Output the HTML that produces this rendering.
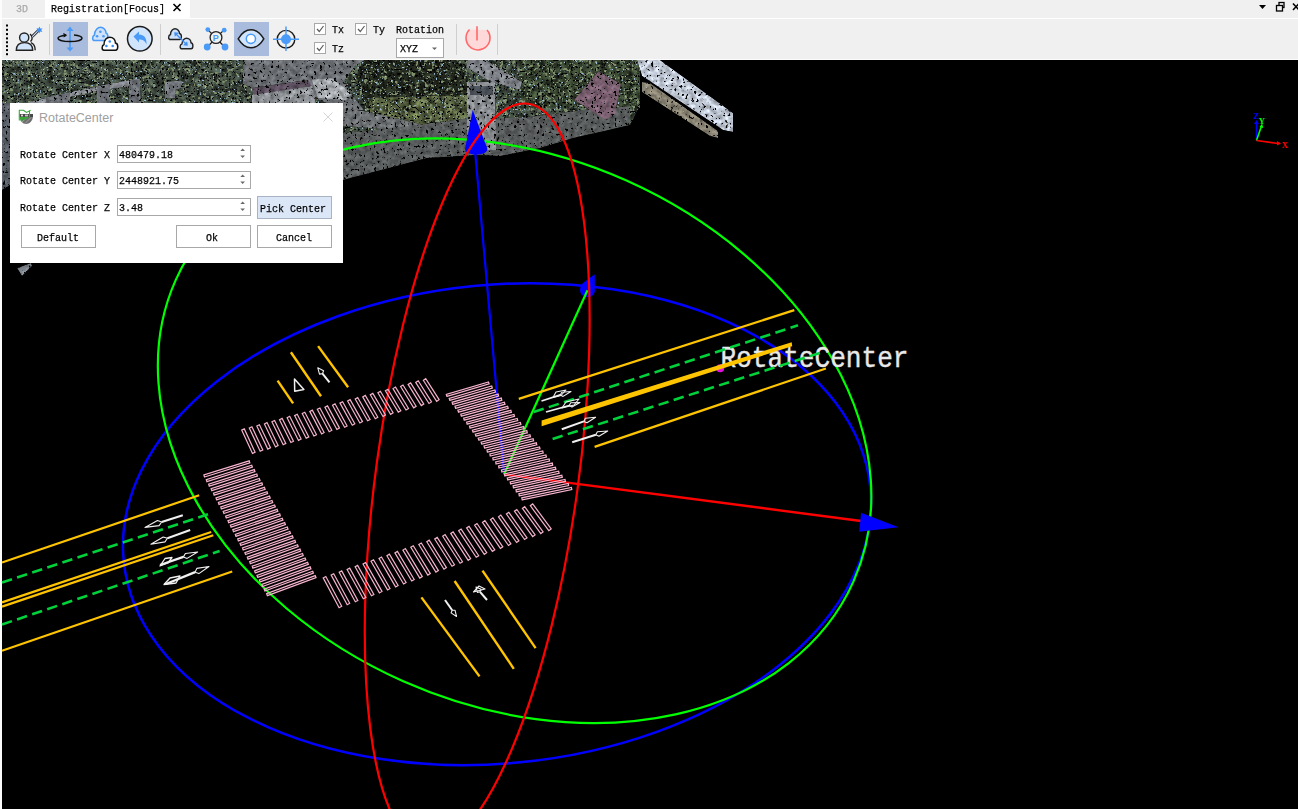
<!DOCTYPE html>
<html><head><meta charset="utf-8">
<style>
*{margin:0;padding:0;box-sizing:border-box}
html,body{width:1298px;height:809px;overflow:hidden;background:#f0f0f0}
body{position:relative;font-family:"Liberation Mono",monospace;color:#000}
.abs{position:absolute}
.mono{font-family:"Liberation Mono",monospace;font-size:11.5px;line-height:12px;white-space:pre;position:absolute;transform-origin:0 0;transform:scaleX(0.8696);-webkit-text-stroke:0.25px currentColor}
#scene{position:absolute;left:0;top:0}
</style></head><body>
<svg id="scene" width="1298" height="809" viewBox="0 0 1298 809">
<rect x="0" y="0" width="1298" height="809" fill="#f0f0f0"/>
<rect x="0" y="0" width="2" height="809" fill="#fcfcfc"/>
<rect x="2" y="60" width="1296" height="749" fill="#000"/>
<defs><filter id="spk" color-interpolation-filters="sRGB" x="0" y="0" width="1298" height="809" filterUnits="userSpaceOnUse">
 <feTurbulence type="fractalNoise" baseFrequency="0.15" numOctaves="2" seed="3" result="n1"/>
 <feColorMatrix in="n1" type="matrix" values="1.0 0 0 0 0.0  1.0 0 0 0 0.0  1.0 0 0 0 0.0  0 0 0 0 1" result="g1"/>
 <feComposite in="SourceGraphic" in2="g1" operator="arithmetic" k1="2" k2="0" k3="0" k4="0" result="m0"/>
 <feTurbulence type="fractalNoise" baseFrequency="0.25" numOctaves="2" seed="23" result="h"/>
 <feColorMatrix in="h" type="matrix" values="0 0 0 0 0.5  0 0 0 0 0.56  0 0 0 0 0.42  10 0 0 0 -6.0" result="hm"/>
 <feComposite in="hm" in2="m0" operator="atop" result="m1"/>
 <feTurbulence type="fractalNoise" baseFrequency="0.45" numOctaves="2" seed="11" result="t"/>
 <feColorMatrix in="t" type="matrix" values="0 0 0 0 0  0 0 0 0 0  0 0 0 0 0  12 0 0 0 -7.199999999999999" result="dk"/>
 <feColorMatrix in="t" type="matrix" values="0 0 0 0 0.62  0 0 0 0 0.76  0 0 0 0 0.86  0 -10 0 0 3.3" result="lt"/>
 <feComposite in="dk" in2="m1" operator="atop" result="s1"/>
 <feComposite in="lt" in2="s1" operator="atop" result="s2"/>
 <feComposite in="s2" in2="SourceGraphic" operator="in"/>
</filter><filter id="spk2" color-interpolation-filters="sRGB" x="0" y="0" width="1298" height="809" filterUnits="userSpaceOnUse">
 <feTurbulence type="fractalNoise" baseFrequency="0.2" numOctaves="2" seed="5" result="n1"/>
 <feColorMatrix in="n1" type="matrix" values="0.4 0 0 0 0.3  0.4 0 0 0 0.3  0.4 0 0 0 0.3  0 0 0 0 1" result="g1"/>
 <feComposite in="SourceGraphic" in2="g1" operator="arithmetic" k1="2" k2="0" k3="0" k4="0" result="m0"/>
 <feOffset in="m0" dx="0" dy="0" result="m1"/>
 <feTurbulence type="fractalNoise" baseFrequency="0.35" numOctaves="2" seed="17" result="t"/>
 <feColorMatrix in="t" type="matrix" values="0 0 0 0 0  0 0 0 0 0  0 0 0 0 0  12 0 0 0 -7.56" result="dk"/>
 <feColorMatrix in="t" type="matrix" values="0 0 0 0 0.85  0 0 0 0 0.9  0 0 0 0 0.95  0 -10 0 0 1.9" result="lt"/>
 <feComposite in="dk" in2="m1" operator="atop" result="s1"/>
 <feComposite in="lt" in2="s1" operator="atop" result="s2"/>
 <feComposite in="s2" in2="SourceGraphic" operator="in"/>
</filter></defs>
<g id="cloud1" filter="url(#spk)">
  <polygon points="2,60 640,60 640,106 630,125 600,132 575,137.5 540,148 500,156 476,155 427,158 343,180 250,195 10,185 2,190" fill="#3e493e"/>
  <polygon points="362,60 460,60 470,84 467,120 420,125 368,112 355,80" fill="#22281d"/>
  <polygon points="368,98 470,95 470,126 420,125 370,112" fill="#505a3a"/>
  <polygon points="520,60 640,60 640,108 520,108" fill="#36432f"/>
</g>
<g id="cloud2" filter="url(#spk2)">
  <polygon points="25,103 70,92 103,85 135,79 140,79 140,85 103,90 70,97 45,103" fill="#8a8e94"/>
  <polygon points="46,97 70,93 70,103 46,103" fill="#6c7076"/>
  <polygon points="129,81 140,79 141,103 129,103" fill="#6c7076"/>
  <polygon points="165,82 182,80 182,88 175,90 175,98 165,98" fill="#70747a"/>
  <polygon points="97,87 110,84 110,103 97,103" fill="#6c7076"/>
  
  <polygon points="243,60 365,60 355,66 345,80 350,92 364,110 344,110 314,98 308,80 252,88 243,84" fill="#6c7074"/>
  <polygon points="252,88 308,80 312,86 254,96" fill="#5d5060"/>
  <polygon points="252,95 312,86 316,103 252,103" fill="#8e9296"/>
  <polygon points="312,80 332,78 352,94 346,100 318,98" fill="#a8acb0"/>
  <polygon points="343,108 370,112 420,124 420,132 343,126" fill="#6e7174"/>
  <polygon points="468,60 486,60 522,82 520,90 489,81 466,67" fill="#80848a"/>
  <polygon points="343,133 400,127 470,118 520,118 560,113 600,108 630,106 630,125 600,132 575,137.5 540,148 500,156 476,155 427,158 343,180" fill="#5a5d5d"/>
  <polygon points="467,82 495,82 496,150 467,150" fill="#8a8e92"/>
  <polygon points="470,86 493,86 493,95 470,95" fill="#4a5058"/>
  <polygon points="574,100 598.6,71 621,84 614.8,114.6 605,119.5" fill="#7a5f70"/>
  <polygon points="637,60 660,60 733,113 733,132 723,130 642,76" fill="#c0c8d5"/>
  <polygon points="642,82 650,83 718,131 718,138 710,136 642,92" fill="#8a8474"/>
  <polygon points="2,103 10,103 10,185 2,190" fill="#5a6068"/>
  <polygon points="17,268 31,263 32,266 22,276" fill="#7a8088"/>
</g>

<g fill="none"><ellipse cx="497.0" cy="524.2" rx="375.1" ry="239.3" transform="rotate(-5.6 497.0 524.2)" stroke="#0000ff" stroke-width="2.5"/><ellipse cx="514.6" cy="430.8" rx="370.9" ry="274.1" transform="rotate(23.96 514.6 430.8)" stroke="#00ff00" stroke-width="2.2"/></g>
<line x1="504.1" y1="474.4" x2="475.3" y2="153.9" stroke="#0000ff" stroke-width="2.2"/><line x1="504.1" y1="474.4" x2="861.0" y2="521.0" stroke="#ff0000" stroke-width="2.4"/><path d="M472.7 110 L465 149 C466 156.5 486.5 156.5 487.5 149 Z" fill="#0000ff"/><path d="M861.1 512.8 L859.2 531.7 L898.6 527.2 Z" fill="#0000ff"/><path d="M594.8 274.2 L583 283 C578.5 287 579 295 585 296.8 C590 298 594.5 295.5 594.8 291 Z" fill="#0000ff"/><line x1="504.1" y1="474.4" x2="587.5" y2="290.2" stroke="#00ff00" stroke-width="2.2"/>
<ellipse cx="477.2" cy="475.7" rx="101.2" ry="375.4" transform="rotate(7.79 477.2 475.7)" stroke="#ff0000" stroke-width="2.2" fill="none"/>
<text x="720.5" y="366.6" font-family="Liberation Mono" font-size="30" fill="#e8e8e8" textLength="188" lengthAdjust="spacingAndGlyphs" stroke="#e8e8e8" stroke-width="0.4">RotateCenter</text>
<circle cx="720.2" cy="368.2" r="4" fill="#e010e0"/>
<g id="roads"><line x1="2.0" y1="562.5" x2="199.2" y2="495.3" stroke="#ffc400" stroke-width="2.2"/><line x1="2.0" y1="582.5" x2="208.0" y2="514.2" stroke="#00d23c" stroke-width="2.6" stroke-dasharray="10.5 5.4"/><line x1="2.0" y1="602.4" x2="211.2" y2="532.0" stroke="#ffc400" stroke-width="2.2"/><line x1="2.0" y1="606.6" x2="213.3" y2="535.2" stroke="#ffc400" stroke-width="2.2"/><line x1="2.0" y1="624.5" x2="219.6" y2="551.0" stroke="#00d23c" stroke-width="2.6" stroke-dasharray="10.5 5.4"/><line x1="2.0" y1="650.8" x2="232.2" y2="571.5" stroke="#ffc400" stroke-width="2.2"/><line x1="518.8" y1="398.9" x2="794.3" y2="310.1" stroke="#ffc400" stroke-width="2.2"/><line x1="533.7" y1="412.1" x2="798.0" y2="325.3" stroke="#00d23c" stroke-width="2.6" stroke-dasharray="10.5 5.4"/><polygon points="541.6,420.6 791.7,342.2 792.2,346.2 541.6,426.2" fill="#ffc400"/><line x1="552.6" y1="439.0" x2="822.7" y2="352.0" stroke="#00d23c" stroke-width="2.6" stroke-dasharray="10.5 5.4"/><line x1="594.6" y1="446.9" x2="825.9" y2="368.5" stroke="#ffc400" stroke-width="2.2"/><line x1="277.6" y1="380.6" x2="293.1" y2="403.4" stroke="#ffc400" stroke-width="2.4"/><line x1="290.9" y1="352.2" x2="321.0" y2="396.2" stroke="#ffc400" stroke-width="2.4"/><line x1="318.1" y1="346.1" x2="348.1" y2="387.3" stroke="#ffc400" stroke-width="2.4"/><line x1="421.4" y1="597.4" x2="479.5" y2="676.4" stroke="#ffc400" stroke-width="2.4"/><line x1="454.6" y1="581.0" x2="513.8" y2="668.8" stroke="#ffc400" stroke-width="2.4"/><line x1="482.5" y1="570.6" x2="535.6" y2="648.1" stroke="#ffc400" stroke-width="2.4"/><line x1="182.8" y1="515.2" x2="161.7" y2="522.0" stroke="#f0f0f0" stroke-width="2.0"/><polygon points="161.7,522.0 157.5,520.6 145.0,527.4 159.1,525.6" fill="none" stroke="#f0f0f0" stroke-width="1.1" stroke-linejoin="round"/><line x1="190.2" y1="530.0" x2="167.4" y2="538.3" stroke="#f0f0f0" stroke-width="2.0"/><polygon points="167.4,538.3 163.2,537.0 150.9,544.2 165.0,541.9" fill="none" stroke="#f0f0f0" stroke-width="1.1" stroke-linejoin="round"/><line x1="160.0" y1="565.0" x2="183.4" y2="556.9" stroke="#f0f0f0" stroke-width="2.2"/><polygon points="183.4,556.9 187.1,558.4 197.6,552.0 185.4,553.5" fill="none" stroke="#f0f0f0" stroke-width="1.1" stroke-linejoin="round"/><polygon points="160.0,566.0 165.0,558.5 172.0,557.5 168.0,563.0" fill="none" stroke="#f0f0f0" stroke-width="1.3" stroke-linejoin="round"/><line x1="166.0" y1="584.0" x2="195.1" y2="572.2" stroke="#f0f0f0" stroke-width="2.4"/><polygon points="195.1,572.2 198.9,573.6 209.0,566.5 196.8,568.4" fill="none" stroke="#f0f0f0" stroke-width="1.1" stroke-linejoin="round"/><polygon points="164.0,584.5 170.0,578.0 180.0,576.0 176.0,583.0" fill="none" stroke="#f0f0f0" stroke-width="1.3" stroke-linejoin="round"/><line x1="541.5" y1="401.0" x2="560.3" y2="394.9" stroke="#f0f0f0" stroke-width="1.8"/><polygon points="560.3,394.9 563.1,396.4 571.0,391.5 561.8,392.2" fill="none" stroke="#f0f0f0" stroke-width="1.1" stroke-linejoin="round"/><polygon points="553.0,397.5 556.0,392.0 566.0,390.0 561.0,395.5" fill="none" stroke="#f0f0f0" stroke-width="1.1" stroke-linejoin="round"/><line x1="546.0" y1="412.0" x2="569.2" y2="405.5" stroke="#f0f0f0" stroke-width="1.8"/><polygon points="569.2,405.5 571.9,407.0 580.0,402.5 570.7,402.8" fill="none" stroke="#f0f0f0" stroke-width="1.1" stroke-linejoin="round"/><polygon points="562.0,408.0 566.0,402.0 579.0,399.0 574.0,405.0" fill="none" stroke="#f0f0f0" stroke-width="1.1" stroke-linejoin="round"/><line x1="561.8" y1="429.3" x2="583.8" y2="421.4" stroke="#f0f0f0" stroke-width="2.0"/><polygon points="583.8,421.4 587.0,422.8 595.6,417.2 585.4,418.3" fill="none" stroke="#f0f0f0" stroke-width="1.1" stroke-linejoin="round"/><line x1="572.2" y1="442.3" x2="595.8" y2="434.8" stroke="#f0f0f0" stroke-width="2.0"/><polygon points="595.8,434.8 598.9,436.3 607.7,431.0 597.4,431.7" fill="none" stroke="#f0f0f0" stroke-width="1.1" stroke-linejoin="round"/><polygon points="294.5,379.0 294.7,391.2 303.9,389.5" fill="none" stroke="#f0f0f0" stroke-width="1.5" stroke-linejoin="round"/><line x1="329.5" y1="382.3" x2="322.5" y2="373.6" stroke="#f0f0f0" stroke-width="2.0"/><polygon points="322.5,373.6 323.6,370.8 317.8,367.8 319.5,374.1" fill="none" stroke="#f0f0f0" stroke-width="1.1" stroke-linejoin="round"/><line x1="445.0" y1="600.0" x2="452.2" y2="610.3" stroke="#f0f0f0" stroke-width="2.0"/><polygon points="452.2,610.3 451.1,612.9 456.5,616.5 455.0,610.2" fill="none" stroke="#f0f0f0" stroke-width="1.1" stroke-linejoin="round"/><line x1="487.0" y1="600.0" x2="480.0" y2="591.8" stroke="#f0f0f0" stroke-width="2.0"/><polygon points="480.0,591.8 481.1,589.3 476.0,587.0 477.4,592.4" fill="none" stroke="#f0f0f0" stroke-width="1.1" stroke-linejoin="round"/><polygon points="473.5,592.0 479.0,586.0 485.0,589.0" fill="none" stroke="#f0f0f0" stroke-width="1.2" stroke-linejoin="round"/></g>
<path d="M204.5 477.0L249.8 462.8L249.2 460.8L203.9 475.0ZM206.9 481.6L252.4 467.2L251.7 465.2L206.3 479.6ZM209.3 486.1L254.9 471.6L254.3 469.6L208.7 484.1ZM211.8 490.7L257.4 476.0L256.8 474.0L211.1 488.7ZM214.2 495.2L260.0 480.5L259.3 478.5L213.5 493.2ZM216.6 499.8L262.5 484.9L261.9 482.9L216.0 497.8ZM219.0 504.4L265.1 489.3L264.4 487.3L218.4 502.4ZM221.4 508.9L267.6 493.7L267.0 491.7L220.8 506.9ZM223.9 513.5L270.2 498.1L269.5 496.1L223.2 511.5ZM226.3 518.0L272.7 502.5L272.0 500.5L225.6 516.1ZM228.7 522.6L275.3 506.9L274.6 505.0L228.0 520.6ZM231.1 527.2L277.8 511.4L277.1 509.4L230.4 525.2ZM233.5 531.7L280.3 515.8L279.7 513.8L232.8 529.7ZM235.9 536.3L282.9 520.2L282.2 518.2L235.3 534.3ZM238.4 540.9L285.4 524.6L284.7 522.6L237.7 538.9ZM240.8 545.4L288.0 529.0L287.3 527.0L240.1 543.4ZM243.2 550.0L290.5 533.4L289.8 531.5L242.5 548.0ZM245.6 554.5L293.1 537.9L292.4 535.9L244.9 552.6ZM248.0 559.1L295.6 542.3L294.9 540.3L247.3 557.1ZM250.4 563.7L298.2 546.7L297.5 544.7L249.7 561.7ZM252.9 568.2L300.7 551.1L300.0 549.1L252.2 566.2ZM255.3 572.8L303.2 555.5L302.5 553.5L254.6 570.8ZM257.7 577.3L305.8 559.9L305.1 558.0L257.0 575.4ZM260.1 581.9L308.3 564.3L307.6 562.4L259.4 579.9ZM262.5 586.5L310.9 568.8L310.2 566.8L261.8 584.5ZM264.9 591.0L313.4 573.2L312.7 571.2L264.2 589.1ZM267.4 595.6L316.0 577.6L315.2 575.6L266.6 593.6Z" stroke="#f4b2cc" stroke-width="1.25" fill="none"/><path d="M241.7 430.1L252.5 453.4L255.1 452.2L244.3 428.9ZM249.3 428.0L260.2 451.2L262.8 450.0L251.9 426.8ZM256.8 426.0L267.8 449.1L270.5 447.8L259.4 424.7ZM264.4 423.9L275.5 446.9L278.1 445.6L267.0 422.6ZM271.9 421.8L283.2 444.7L285.8 443.4L274.6 420.5ZM279.5 419.7L290.9 442.5L293.5 441.3L282.1 418.4ZM287.1 417.7L298.5 440.4L301.1 439.1L289.7 416.3ZM294.6 415.6L306.2 438.2L308.8 436.9L297.2 414.3ZM302.2 413.5L313.9 436.0L316.5 434.7L304.8 412.2ZM309.8 411.4L321.6 433.9L324.1 432.5L312.3 410.1ZM317.3 409.3L329.2 431.7L331.8 430.3L319.9 408.0ZM324.9 407.3L336.9 429.5L339.5 428.1L327.5 405.9ZM332.5 405.2L344.6 427.3L347.1 426.0L335.0 403.8ZM340.0 403.1L352.3 425.2L354.8 423.8L342.6 401.7ZM347.6 401.0L359.9 423.0L362.5 421.6L350.1 399.6ZM355.2 399.0L367.6 420.8L370.1 419.4L357.7 397.5ZM362.7 396.9L375.3 418.7L377.8 417.2L365.3 395.4ZM370.3 394.8L383.0 416.5L385.5 415.0L372.8 393.4ZM377.9 392.7L390.6 414.3L393.1 412.8L380.4 391.3ZM385.4 390.7L398.3 412.1L400.8 410.7L387.9 389.2ZM393.0 388.6L406.0 410.0L408.5 408.5L395.5 387.1ZM400.6 386.5L413.7 407.8L416.1 406.3L403.0 385.0ZM408.1 384.4L421.3 405.6L423.8 404.1L410.6 382.9ZM415.7 382.4L429.0 403.5L431.5 401.9L418.2 380.8ZM423.3 380.3L436.7 401.3L439.1 399.7L425.7 378.7Z" stroke="#f4b2cc" stroke-width="1.2" fill="none"/><path d="M446.9 396.3L489.1 383.9L488.5 381.9L446.3 394.3ZM449.8 400.3L492.3 388.0L491.7 386.0L449.2 398.3ZM452.7 404.3L495.5 392.0L494.9 390.0L452.1 402.3ZM455.6 408.3L498.6 396.1L498.1 394.1L455.0 406.2ZM458.5 412.2L501.8 400.2L501.3 398.1L457.9 410.2ZM461.4 416.2L505.0 404.2L504.4 402.2L460.8 414.2ZM464.3 420.2L508.2 408.3L507.6 406.3L463.7 418.2ZM467.2 424.2L511.4 412.3L510.8 410.3L466.6 422.2ZM470.1 428.2L514.5 416.4L514.0 414.4L469.5 426.1ZM473.0 432.1L517.7 420.5L517.2 418.4L472.4 430.1ZM475.9 436.1L520.9 424.5L520.4 422.5L475.3 434.1ZM478.8 440.1L524.1 428.6L523.6 426.6L478.2 438.1ZM481.7 444.1L527.3 432.7L526.8 430.6L481.1 442.1ZM484.6 448.1L530.5 436.7L529.9 434.7L484.0 446.0ZM487.4 452.1L533.6 440.8L533.1 438.7L487.0 450.0ZM490.3 456.0L536.8 444.8L536.3 442.8L489.9 454.0ZM493.2 460.0L540.0 448.9L539.5 446.9L492.8 458.0ZM496.1 464.0L543.2 453.0L542.7 450.9L495.7 462.0ZM499.0 468.0L546.4 457.0L545.9 455.0L498.6 465.9ZM501.9 472.0L549.5 461.1L549.1 459.0L501.5 469.9ZM504.8 475.9L552.7 465.2L552.3 463.1L504.4 473.9ZM507.7 479.9L555.9 469.2L555.4 467.2L507.3 477.9ZM510.6 483.9L559.1 473.3L558.6 471.2L510.2 481.9ZM513.5 487.9L562.3 477.3L561.8 475.3L513.1 485.8ZM516.4 491.9L565.4 481.4L565.0 479.4L516.0 489.8ZM519.3 495.8L568.6 485.5L568.2 483.4L518.9 493.8ZM522.2 499.8L571.8 489.5L571.4 487.5L521.8 497.8Z" stroke="#f4b2cc" stroke-width="1.25" fill="none"/><path d="M323.2 577.9L339.1 607.7L341.7 606.3L325.8 576.5ZM331.2 575.1L347.2 604.7L349.7 603.3L333.7 573.7ZM339.2 572.3L355.3 601.8L357.8 600.4L341.7 570.9ZM347.1 569.5L363.3 598.8L365.9 597.4L349.7 568.1ZM355.1 566.8L371.4 595.8L373.9 594.4L357.6 565.4ZM363.0 564.0L379.4 592.9L382.0 591.4L365.6 562.6ZM371.0 561.2L387.5 589.9L390.0 588.5L373.5 559.8ZM379.0 558.4L395.6 586.9L398.1 585.5L381.5 557.0ZM386.9 555.7L403.6 584.0L406.1 582.5L389.4 554.2ZM394.9 552.9L411.7 581.0L414.2 579.5L397.4 551.4ZM402.9 550.1L419.8 578.1L422.3 576.6L405.4 548.6ZM410.8 547.3L427.8 575.1L430.3 573.6L413.3 545.8ZM418.8 544.5L435.9 572.1L438.4 570.6L421.3 543.0ZM426.8 541.8L444.0 569.2L446.4 567.6L429.2 540.2ZM434.7 539.0L452.0 566.2L454.5 564.7L437.2 537.4ZM442.7 536.2L460.1 563.2L462.5 561.7L445.1 534.6ZM450.7 533.4L468.2 560.3L470.6 558.7L453.1 531.9ZM458.6 530.7L476.2 557.3L478.7 555.7L461.1 529.1ZM466.6 527.9L484.3 554.4L486.7 552.7L469.0 526.3ZM474.6 525.1L492.4 551.4L494.8 549.8L477.0 523.5ZM482.5 522.3L500.4 548.4L502.8 546.8L484.9 520.7ZM490.5 519.6L508.5 545.5L510.9 543.8L492.9 517.9ZM498.5 516.8L516.6 542.5L518.9 540.8L500.8 515.1ZM506.4 514.0L524.6 539.5L527.0 537.9L508.8 512.3ZM514.4 511.2L532.7 536.6L535.1 534.9L516.8 509.5ZM522.4 508.4L540.8 533.6L543.1 531.9L524.7 506.7ZM530.3 505.7L548.8 530.7L551.2 528.9L532.7 503.9Z" stroke="#f4b2cc" stroke-width="1.2" fill="none"/>
<line x1="1256.5" y1="140.5" x2="1256.5" y2="123.0" stroke="#0000ff" stroke-width="1.6"/><path d="M1254 124 L1256.5 120 L1259 124 Z" fill="#0000ff"/><line x1="1256.5" y1="140.5" x2="1261.5" y2="126.0" stroke="#00ff00" stroke-width="1.6"/><path d="M1259.5 127 L1262.2 123.5 L1263.2 128 Z" fill="#00ff00"/><line x1="1256.5" y1="140.5" x2="1278.0" y2="143.5" stroke="#ff0000" stroke-width="1.6"/><path d="M1277 141 L1281 143.5 L1277 145.5 Z" fill="#ff0000"/><text x="1253.6" y="119.4" font-family="Liberation Serif" font-size="8.6" font-weight="bold" fill="#0000ff">Z</text><text x="1258.8" y="123.7" font-family="Liberation Serif" font-size="8.6" font-weight="bold" fill="#00ff00">Y</text><text x="1281.8" y="147.5" font-family="Liberation Serif" font-size="8.6" font-weight="bold" fill="#ff0000">X</text>
</svg>

<!-- tab bar -->
<div class="abs" style="left:45px;top:0;width:145px;height:18px;background:#fff"></div>
<div class="abs" style="left:0;top:18px;width:1298px;height:1px;background:#fff"></div>
<div class="abs" style="left:0;top:59px;width:1298px;height:1px;background:#fcfcfc"></div>
<div class="mono" style="left:16px;top:3px;color:#a8a8a8">3D</div>
<div class="mono" style="left:51px;top:3px">Registration[Focus]</div>
<svg class="abs" style="left:0;top:0" width="1298" height="60">
  <path d="M173.5 4 L180.5 11 M180.5 4 L173.5 11" stroke="#000" stroke-width="1.6"/>
  <path d="M1259 5 L1266 5 L1262.5 9 Z" fill="#000"/>
  <rect x="1279" y="2.5" width="5" height="5" fill="none" stroke="#000" stroke-width="1.3"/>
  <rect x="1276.5" y="5.5" width="6" height="5.5" fill="#f0f0f0" stroke="#000" stroke-width="1.3"/>
  <path d="M1293 3.5 L1299 10 M1299 3.5 L1293 10" stroke="#000" stroke-width="1.6"/>
  <!-- grip -->
  <g fill="#000">
    <rect x="6" y="24.5" width="2" height="2"/><rect x="6" y="28.8" width="2" height="2"/>
    <rect x="6" y="33.1" width="2" height="2"/><rect x="6" y="37.4" width="2" height="2"/>
    <rect x="6" y="41.3" width="2" height="2"/><rect x="6" y="45.2" width="2" height="2"/>
    <rect x="6" y="49.1" width="2" height="2"/><rect x="6" y="53.2" width="2" height="2"/>
  </g>
  <!-- separators -->
  <g fill="#cfcfcf">
    <rect x="49" y="24" width="1" height="31"/>
    <rect x="160" y="24" width="1" height="31"/>
    <rect x="456" y="24" width="1" height="31"/>
    <rect x="497" y="24" width="1" height="31"/>
  </g>
  <!-- active buttons -->
  <rect x="53" y="22" width="35" height="34" fill="#a9bcdd"/>
  <rect x="234" y="22" width="35" height="34" fill="#a9bcdd"/>
  <!-- icon1 person -->
  <path d="M30 34.2 A4.6 4.6 0 0 1 30.5 41.6" fill="none" stroke="#222" stroke-width="1.4"/>
  <path d="M31 42.6 C33.5 43.6 35.2 46.3 35.2 50.2" fill="none" stroke="#222" stroke-width="1.4"/>
  <circle cx="24.2" cy="37.6" r="4.6" fill="#d0e4fb" stroke="#222" stroke-width="1.4"/>
  <path d="M16.3 50.3 C16.3 45.3 19.6 42.6 24.5 42.6 C29.4 42.6 32.7 45.3 32.7 50.3 Z" fill="#d0e4fb" stroke="#222" stroke-width="1.4"/>
  <path d="M32.3 36.6 L38.6 30.2" stroke="#222" stroke-width="2.8"/>
  <path d="M32.3 36.6 L38.6 30.2" stroke="#d0e4fb" stroke-width="1.1"/>
  <path d="M39.4 26.6 L40.3 28.6 L42.6 28.4 L41.2 30 L42.4 32 L40.2 31.6 L39.2 33.4 L38.4 31.4 L36.2 31.6 L37.6 30 L36.4 28.2 L38.6 28.6 Z" fill="#3d8ff5"/>
  <!-- rotate icon -->
  <path d="M70 28 L70 50" stroke="#4a9af7" stroke-width="1.6"/>
  <path d="M66.5 31 L70 26.5 L73.5 31 Z M66.5 47.5 L70 51.5 L73.5 47.5 Z" fill="#4a9af7"/>
  <path d="M66 35.2 C60 35.8 58 37 58 38.3 C58 40.3 63.5 41.6 70 41.6 C76.5 41.6 82 40.3 82 38.3 C82 36.6 78 35.4 74 35" fill="none" stroke="#111" stroke-width="1.5"/>
  <path d="M63.5 33.5 L66.5 35.2 L63.8 37" fill="#111" stroke="#111" stroke-width="1"/>
  <!-- clouds -->
  <path d="M94.5 40.5 C92 40.5 92 36 94.5 35 C94.5 30 98 27.2 100.5 27.2 C103.5 27.2 106 30 106 33 C108.5 33.5 108.5 40.5 106 40.5 Z" fill="#cfe2fb" stroke="#4a9af7" stroke-width="1.5"/>
  <g fill="#4a9af7"><circle cx="100.4" cy="31.8" r="1.3"/><circle cx="97.1" cy="36.2" r="1.3"/><circle cx="103.5" cy="36.2" r="1.3"/></g>
  <path d="M104 50.2 C101.5 50.2 101.5 45.5 104 44.5 C104 39.5 107 37.2 109.8 37.2 C112.8 37.2 115.5 39.5 115.5 43 C118.5 43.5 118.5 50.2 115.5 50.2 Z" fill="#fff" stroke="#111" stroke-width="1.5"/>
  <g fill="#3d8ff5"><circle cx="109.8" cy="41.5" r="1.3"/><circle cx="106.4" cy="46" r="1.3"/><circle cx="112.7" cy="46" r="1.3"/></g>
  <!-- undo -->
  <circle cx="139.8" cy="38.8" r="12.3" fill="#d0e4fb" stroke="#1a1a1a" stroke-width="1.5"/>
  <path d="M133.5 36.5 L139 31.5 L139 34.5 C144 34.5 147 38 146.5 44.5 C145 40.5 142.5 39.5 139 39.5 L139 42.5 Z" fill="#4a9af7"/>
  <!-- cloud arrow -->
  <path d="M170.5 39.5 C168 39.5 168 35.5 170.5 34.5 C170.5 31 173 28.8 175 28.8 C177.5 28.8 179.5 31 179.5 33.5 C182 34 182 39.5 179.5 39.5 Z" fill="#cfe2fb" stroke="#222" stroke-width="1.4"/>
  <path d="M182 48.8 C179.5 48.8 179.5 44.8 182 43.8 C182 40.3 184.5 38.2 186.5 38.2 C189 38.2 191 40.3 191 42.8 C193.5 43.3 193.5 48.8 191 48.8 Z" fill="#cfe2fb" stroke="#222" stroke-width="1.4"/>
  <path d="M175.5 33.5 L186.5 44.5" stroke="#3d8ff5" stroke-width="1.3"/>
  <path d="M174.2 32.2 L178.8 32.8 L174.8 36.8 Z M187.8 45.8 L183.2 45.2 L187.2 41.2 Z" fill="#3d8ff5"/>
  <!-- P icon -->
  <path d="M207.8 29.6 L224.2 46.5 M224.2 29.6 L207.8 46.5" stroke="#222" stroke-width="1.3"/>
  <circle cx="216" cy="37.5" r="5.9" fill="#f0f0f0" stroke="#222" stroke-width="1.3"/>
  <text x="212.7" y="41.3" font-family="Liberation Sans" font-size="9" font-weight="bold" fill="#4a9af7">P</text>
  <g fill="#4a9af7"><circle cx="207.8" cy="29.6" r="2.4"/><circle cx="224.2" cy="30.2" r="2.4"/><circle cx="207.2" cy="47" r="3.4"/><circle cx="225" cy="47" r="3.4"/></g>
  <!-- eye -->
  <path d="M238.2 38.8 C242 32.5 246 29.8 251 29.8 C256 29.8 260 32.5 263.8 38.8 C260 45 256 47.8 251 47.8 C246 47.8 242 45 238.2 38.8 Z" fill="#d0e4fb" stroke="#1a1a1a" stroke-width="1.5"/>
  <circle cx="250.9" cy="38.8" r="4.6" fill="#fff" stroke="#4a9af7" stroke-width="1.5"/>
  <!-- target -->
  <circle cx="286" cy="39.2" r="8.8" fill="none" stroke="#1a1a1a" stroke-width="1.4"/>
  <path d="M273 39.2 L299 39.2 M286 26.5 L286 51" stroke="#4a9af7" stroke-width="1.5"/>
  <circle cx="286" cy="39.2" r="5" fill="#4a9af7"/>
  <!-- checkboxes -->
  <g fill="#fff" stroke="#a8a8a8" stroke-width="1">
    <rect x="314.5" y="23.5" width="11" height="11"/>
    <rect x="355.5" y="23.5" width="11" height="11"/>
    <rect x="314.5" y="42.5" width="11" height="11"/>
  </g>
  <g fill="none" stroke="#5a5a5a" stroke-width="1.2">
    <path d="M317 29 L319.3 31.5 L323.5 26"/>
    <path d="M358 29 L360.3 31.5 L364.5 26"/>
    <path d="M317 48 L319.3 50.5 L323.5 45"/>
  </g>
  <!-- combo -->
  <rect x="396.5" y="38.5" width="47" height="19" fill="#fff" stroke="#a8a8a8" stroke-width="1"/>
  <path d="M432 47.5 L437 47.5 L434.5 50 Z" fill="#666"/>
  <!-- power -->
  <path d="M469.5 29.5 A12 12 0 1 0 487 30" fill="#ffd9d9" stroke="#ff6868" stroke-width="1.6"/>
  <path d="M477 26.3 L477 40.6" stroke="#ff6868" stroke-width="1.6"/>
</svg>
<div class="mono" style="left:332px;top:24px">Tx</div>
<div class="mono" style="left:373px;top:24px">Ty</div>
<div class="mono" style="left:332px;top:43px">Tz</div>
<div class="mono" style="left:396px;top:24px">Rotation</div>
<div class="mono" style="left:400px;top:43px">XYZ</div>

<!-- dialog -->
<div class="abs" style="left:10px;top:103px;width:333px;height:160px;background:#fff"></div>
<svg class="abs" style="left:0;top:100px" width="345" height="165" viewBox="0 100 345 165">
  <path d="M20 117 L33 115.5 C33 121 29.5 124 26 124 C22.5 124 20 121 20 117 Z" fill="#6e6e6e"/>
  <path d="M22 122 L28 116.5 M25 123.5 L31 117.5" stroke="#b0b0b0" stroke-width="0.8"/>
  <path d="M19.5 117 L29.5 117 L21 121.5 Z" fill="#35a535"/>
  <rect x="19.5" y="114" width="13.5" height="3" fill="#4a4a4a"/>
  <rect x="21" y="114.6" width="2" height="1.8" fill="#d8d8d8"/><rect x="25" y="114.6" width="3" height="1.8" fill="#c8c8c8"/>
  <path d="M19.3 120.5 L19.3 110.3 L23.5 110.3 L26.5 112.4 L30.6 110.3 M29.5 110.5 L29.5 117" fill="none" stroke="#3aa83a" stroke-width="1.1"/>
  <path d="M323.5 112.5 L332.5 121.5 M332.5 112.5 L323.5 121.5" stroke="#d4d4d4" stroke-width="1"/>
  <g fill="#fff" stroke="#a8a8a8" stroke-width="1">
    <rect x="117.5" y="145.5" width="133" height="17"/>
    <rect x="117.5" y="171.5" width="133" height="17"/>
    <rect x="117.5" y="198.5" width="133" height="17"/>
    <rect x="21.5" y="225.5" width="74" height="22"/>
    <rect x="176.5" y="225.5" width="74" height="22"/>
    <rect x="257.5" y="225.5" width="74" height="22"/>
  </g>
  <rect x="257.5" y="196.5" width="74" height="22" fill="#dbe6f6" stroke="#a8b4c4" stroke-width="1"/>
  <g fill="#6a6a6a">
    <path d="M240.3 151 L245 151 L242.65 148.6 Z M240.3 155.6 L245 155.6 L242.65 158 Z"/>
    <path d="M240.3 177 L245 177 L242.65 174.6 Z M240.3 181.6 L245 181.6 L242.65 184 Z"/>
    <path d="M240.3 204 L245 204 L242.65 201.6 Z M240.3 208.6 L245 208.6 L242.65 211 Z"/>
  </g>
</svg>
<div class="abs" style="left:39px;top:111px;font-family:'Liberation Sans';font-size:12.5px;line-height:14px;color:#a0a0a0;white-space:pre">RotateCenter</div>
<div class="mono" style="left:20px;top:149px">Rotate Center X</div>
<div class="mono" style="left:20px;top:175px">Rotate Center Y</div>
<div class="mono" style="left:20px;top:202px">Rotate Center Z</div>
<div class="mono" style="left:119px;top:149px">480479.18</div>
<div class="mono" style="left:119px;top:175px">2448921.75</div>
<div class="mono" style="left:119px;top:202px">3.48</div>
<div class="mono" style="left:260px;top:203px">Pick Center</div>
<div class="mono" style="left:37px;top:232px">Default</div>
<div class="mono" style="left:206px;top:232px">Ok</div>
<div class="mono" style="left:276px;top:232px">Cancel</div>
</body></html>
